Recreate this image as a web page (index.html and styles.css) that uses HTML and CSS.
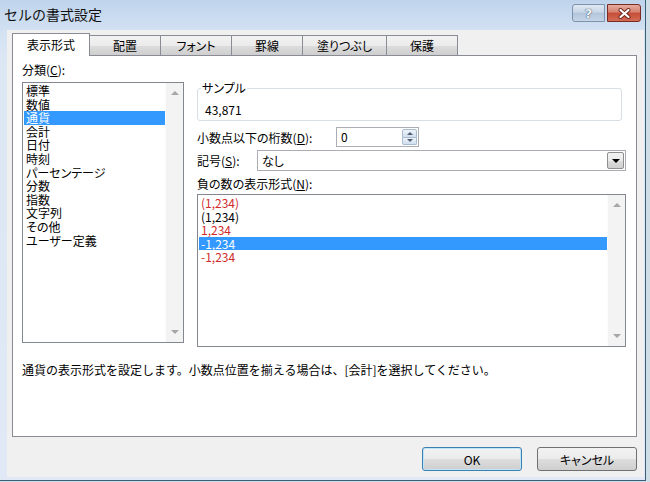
FILE: index.html
```html
<!DOCTYPE html>
<html lang="ja">
<head>
    <meta charset="UTF-8">
    <meta name="viewport" content="width=device-width, initial-scale=1.0">
    <title>セルの書式設定</title>
    <link rel="stylesheet" href="styles.css">
</head>
<body>
    <div class="window">
        <div class="titlebar">
            <span class="title">セルの書式設定</span>
            <div class="caption-buttons">
                <span class="cap-help">?</span>
                <span class="cap-close">
                    <svg width="13" height="11" viewBox="0 0 13 11">
                        <path d="M2.5 2 L10.5 9 M10.5 2 L2.5 9" stroke="#6b2219" stroke-width="4" stroke-linecap="round"/>
                        <path d="M2.5 2 L10.5 9 M10.5 2 L2.5 9" stroke="#ffffff" stroke-width="2.2" stroke-linecap="round"/>
                    </svg>
                </span>
            </div>
        </div>

        <div class="client">
            <div class="tabs">
                <div class="tab active">表示形式</div>
                <div class="tab">配置</div>
                <div class="tab">フォント</div>
                <div class="tab">罫線</div>
                <div class="tab">塗りつぶし</div>
                <div class="tab">保護</div>
            </div>

            <div class="panel">
                <div class="columns">
                    <div class="col-left">
                        <div class="label">分類(<u>C</u>):</div>
                        <div class="listbox category">
                            <ul class="items">
                                <li>標準</li>
                                <li>数値</li>
                                <li class="selected">通貨</li>
                                <li>会計</li>
                                <li>日付</li>
                                <li>時刻</li>
                                <li>パーセンテージ</li>
                                <li>分数</li>
                                <li>指数</li>
                                <li>文字列</li>
                                <li>その他</li>
                                <li>ユーザー定義</li>
                            </ul>
                            <div class="scrollbar">
                                <span class="arrow-up"></span>
                                <span class="arrow-down"></span>
                            </div>
                        </div>
                    </div>

                    <div class="col-right">
                        <fieldset class="sample">
                            <legend>サンプル</legend>
                            <div class="sample-value">43,871</div>
                        </fieldset>

                        <div class="field-row decimals">
                            <span class="decimals-label">小数点以下の桁数(<u>D</u>):</span>
                            <div class="spin">
                                <span class="spin-value">0</span>
                                <div class="spin-buttons">
                                    <span class="spin-up"></span>
                                    <span class="spin-down"></span>
                                </div>
                            </div>
                        </div>

                        <div class="field-row symbol">
                            <span class="symbol-label">記号(<u>S</u>):</span>
                            <div class="combo">
                                <span class="combo-value">なし</span>
                                <span class="combo-button"></span>
                            </div>
                        </div>

                        <div class="label negative-label">負の数の表示形式(<u>N</u>):</div>
                        <div class="listbox negative">
                            <ul class="items">
                                <li class="red">(1,234)</li>
                                <li>(1,234)</li>
                                <li class="red">1,234</li>
                                <li class="selected">-1,234</li>
                                <li class="red">-1,234</li>
                            </ul>
                            <div class="scrollbar">
                                <span class="arrow-up"></span>
                                <span class="arrow-down"></span>
                            </div>
                        </div>
                    </div>
                </div>

                <p class="desc">通貨の表示形式を設定します。小数点位置を揃える場合は、[会計]を選択してください。</p>
            </div>

            <div class="footer">
                <div class="btn default">OK</div>
                <div class="btn">キャンセル</div>
            </div>
        </div>
    </div>
</body>
</html>
```

FILE: styles.css
```css
        body {
            margin: 0;
            padding: 0;
            background-color: #cfdde6;
            font-family: "Noto Sans CJK JP", "Noto Sans", sans-serif;
            font-size: 12px;
            color: #000;
            font-feature-settings: "palt";
        }
        .window {
            width: 645px;
            height: 480px;
            display: flex;
            flex-direction: column;
            background: linear-gradient(to bottom, #bfd4ec 0, #d2e1f2 30px, #dce7f4 60px, #e0e9f5);
            border-right: 1px solid #3a6078;
            border-bottom: 1px solid #3a6078;
        }

        /* title bar */
        .titlebar {
            flex: none;
            height: 30px;
            display: flex;
        }
        .title {
            padding-left: 4px;
            line-height: 28px;
            font-size: 14px;
            font-feature-settings: normal;
            color: #111;
        }
        .caption-buttons {
            margin: 4px 4px 0 auto;
            display: flex;
            gap: 2px;
            height: 18px;
        }
        .cap-help,
        .cap-close {
            box-sizing: border-box;
            height: 18px;
            display: flex;
            align-items: center;
            justify-content: center;
        }
        .cap-help {
            width: 33px;
            border: 1px solid #7d93ad;
            border-radius: 3px 0 0 3px;
            background: linear-gradient(to bottom, #dfe8f2, #c8d6e6 45%, #b3c5da 50%, #c6d5e7);
            font-family: "DejaVu Sans", sans-serif;
            font-weight: bold;
            font-size: 13px;
            color: #eef3f8;
            text-shadow: 0 0 1px #3e5268, 0 0 1px #3e5268;
        }
        .cap-close {
            width: 34px;
            border: 1px solid #7a2c24;
            border-radius: 0 3px 3px 0;
            background: linear-gradient(to bottom, #e5ab9d, #d6806f 45%, #c54c38 50%, #d26c55);
        }

        /* client area */
        .client {
            flex: 1;
            margin: 0 1px 3px 7px;
            padding: 3px 7px 0 5px;
            background-color: #f0f0f0;
            display: flex;
            flex-direction: column;
        }
        .tabs {
            flex: none;
            height: 22px;
            display: flex;
            align-items: flex-end;
        }
        .tab {
            box-sizing: border-box;
            min-width: 72px;
            height: 20px;
            padding: 0 14px;
            margin-left: -1px;
            border: 1px solid #898c95;
            border-bottom: none;
            background: linear-gradient(to bottom, #f2f2f2, #ebebeb 50%, #dddddd 50%, #cfcfcf);
            line-height: 19px;
            text-align: center;
        }
        .tab:first-child {
            margin-left: 0;
        }
        .tab.active {
            position: relative;
            z-index: 1;
            height: 23px;
            margin-bottom: -1px;
            background: #fff;
            line-height: 22px;
        }
        .panel {
            flex: none;
            box-sizing: border-box;
            height: 382px;
            padding: 6px 10px 0 9px;
            border: 1px solid #898c95;
            background-color: #fff;
        }
        .columns {
            display: flex;
            gap: 13px;
        }
        .col-left {
            flex: none;
            width: 162px;
        }
        .col-right {
            flex: 1;
        }
        .label {
            line-height: 16px;
        }
        .negative-label {
            margin-top: 5px;
            line-height: 15px;
        }

        /* list boxes */
        .listbox {
            box-sizing: border-box;
            display: flex;
            padding: 1px 0 1px 1px;
            border: 1px solid #828790;
            background-color: #fff;
        }
        .category {
            height: 261px;
            margin-top: 4px;
        }
        .negative {
            height: 153px;
            margin-top: 3px;
        }
        .items {
            flex: 1;
            list-style-type: none;
            margin: 0;
            padding: 0;
        }
        .items li {
            padding-left: 2px;
            line-height: 13.6px;
            white-space: nowrap;
        }
        .items li.red {
            color: #d02b2b;
        }
        .items li.selected {
            background-color: #3399ff;
            color: #fff;
        }
        .scrollbar {
            flex: none;
            width: 17px;
            margin-top: -1px;
            margin-bottom: -1px;
            padding: 8px 0;
            display: flex;
            flex-direction: column;
            justify-content: space-between;
            align-items: center;
            background-color: #f3f3f3;
            border-left: 1px solid #fbfbfb;
        }
        .arrow-up {
            width: 0;
            height: 0;
            border-left: 4px solid transparent;
            border-right: 4px solid transparent;
            border-bottom: 4px solid #a6a6a6;
        }
        .arrow-down {
            width: 0;
            height: 0;
            border-left: 4px solid transparent;
            border-right: 4px solid transparent;
            border-top: 4px solid #a6a6a6;
        }

        /* sample group */
        .sample {
            min-width: 0;
            margin: 19px 4px 0 0;
            padding: 0 0 3px 3px;
            border: 1px solid #d5dfe5;
            border-radius: 3px;
        }
        .sample legend {
            padding: 0 1px;
            line-height: 14px;
        }
        .sample-value {
            padding: 8px 0 0 4px;
            line-height: 14px;
        }

        /* spin and combo rows */
        .field-row {
            display: flex;
            align-items: center;
        }
        .decimals {
            margin-top: 6px;
            height: 20px;
        }
        .decimals-label {
            width: 139px;
        }
        .spin {
            box-sizing: border-box;
            width: 83px;
            height: 20px;
            display: flex;
            border: 1px solid #abadb3;
            background-color: #fff;
        }
        .spin-value {
            flex: 1;
            padding-left: 4px;
            line-height: 18px;
        }
        .spin-buttons {
            width: 15px;
            margin: 1px 1px 1px 0;
            display: flex;
            flex-direction: column;
        }
        .spin-up,
        .spin-down {
            flex: 1;
            display: flex;
            align-items: center;
            justify-content: center;
            border: 1px solid #a8bad0;
            background: linear-gradient(to bottom, #eef4fa, #d0deee);
        }
        .spin-up {
            border-radius: 2px 2px 0 0;
        }
        .spin-down {
            border-top: none;
            border-radius: 0 0 2px 2px;
        }
        .spin-up::after {
            content: "";
            border-left: 3px solid transparent;
            border-right: 3px solid transparent;
            border-bottom: 3px solid #4e5d70;
        }
        .spin-down::after {
            content: "";
            border-left: 3px solid transparent;
            border-right: 3px solid transparent;
            border-top: 3px solid #4e5d70;
        }
        .symbol {
            margin-top: 3px;
            height: 21px;
        }
        .symbol-label {
            width: 60px;
        }
        .combo {
            flex: 1;
            box-sizing: border-box;
            height: 21px;
            display: flex;
            border: 1px solid #abadb3;
            background-color: #fff;
        }
        .combo-value {
            flex: 1;
            padding-left: 4px;
            line-height: 19px;
        }
        .combo-button {
            width: 15px;
            margin: 1px;
            display: flex;
            align-items: center;
            justify-content: center;
            border: 1px solid #8e8f8f;
            border-radius: 2px;
            background: linear-gradient(to bottom, #f2f2f2, #ebebeb 50%, #dddddd 50%, #cfcfcf);
        }
        .combo-button::after {
            content: "";
            border-left: 4px solid transparent;
            border-right: 4px solid transparent;
            border-top: 4px solid #000;
        }

        .desc {
            margin: 15px 0 0;
            line-height: 16px;
            font-feature-settings: normal;
        }

        /* dialog buttons */
        .footer {
            flex: none;
            display: flex;
            justify-content: flex-end;
            gap: 15px;
            padding-top: 10px;
        }
        .btn {
            box-sizing: border-box;
            width: 100px;
            height: 24px;
            display: flex;
            align-items: center;
            justify-content: center;
            border: 1px solid #707070;
            border-radius: 3px;
            background: linear-gradient(to bottom, #f2f2f2, #ebebeb 50%, #dddddd 50%, #cfcfcf);
        }
        .btn.default {
            border-color: #3c7fb1;
            box-shadow: inset 0 0 0 1px #bfe6f8;
        }
```
